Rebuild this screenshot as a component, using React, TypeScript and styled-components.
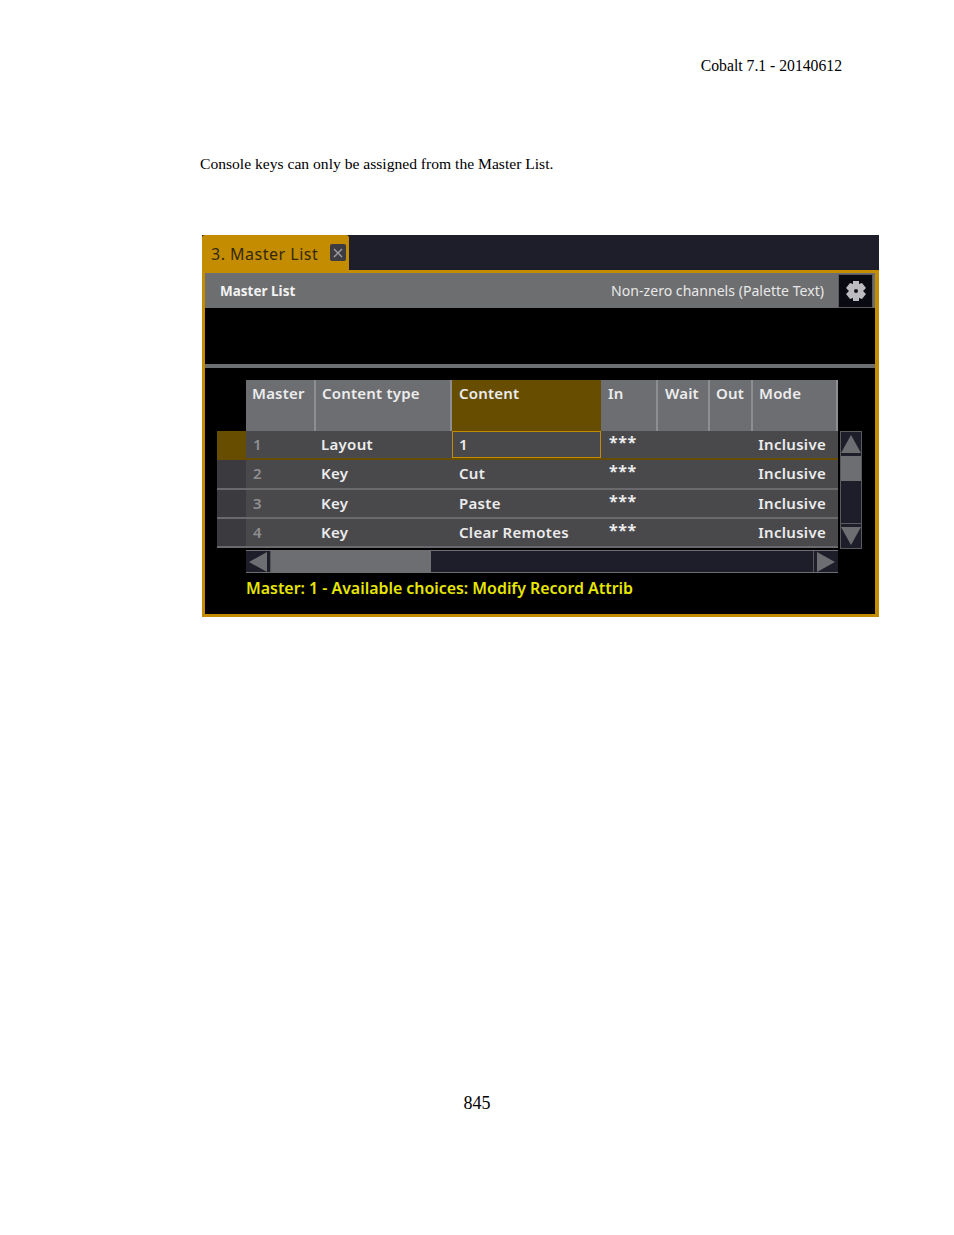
import React from "react";
import styled, { createGlobalStyle } from "styled-components";

const GlobalStyle = createGlobalStyle`
  html, body {
    margin: 0;
    padding: 0;
    background: #fff;
  }
`;

const UI_FONT = `"Noto Sans", "Open Sans", sans-serif`;
const COLUMNS = "70px 136px 149px 57px 52px 43px 85px";

const Page = styled.div`
  width: 954px;
  height: 1235px;
  overflow: hidden;
  font-family: "Liberation Serif", serif;
  color: #000;
`;

const RunningHead = styled.div`
  padding: 57px 112px 0 0;
  height: 18px;
  line-height: 18px;
  font-size: 15.7px;
  text-align: right;
`;

const BodyText = styled.p`
  margin: 0;
  padding: 80px 0 0 200px;
  height: 18px;
  line-height: 18px;
  font-size: 15.6px;
`;

const Window = styled.div`
  margin: 62px 0 0 202px;
  width: 677px;
  height: 382px;
  font-family: ${UI_FONT};
`;

const TabStrip = styled.div`
  height: 35px;
  background: #1e1e2a;
`;

const Tab = styled.div`
  width: 147px;
  height: 35px;
  box-sizing: border-box;
  padding: 9px 3px 0 9px;
  display: flex;
  align-items: flex-start;
  justify-content: space-between;
  background: #c48c00;
  border-radius: 3px 3px 0 0;
  color: #33290f;
  font-size: 16px;
  line-height: 20px;
  letter-spacing: 0.5px;
`;

const CloseButton = styled.span`
  width: 16px;
  height: 17px;
  display: flex;
  align-items: center;
  justify-content: center;
  background: #3c3c42;
  border-radius: 2px;
`;

const Frame = styled.div`
  height: 347px;
  box-sizing: border-box;
  border: solid #c48c00;
  border-width: 3px 4px 3px 3px;
  background: #000;
`;

const TitleBar = styled.div`
  height: 35px;
  display: flex;
  align-items: center;
  background: #6d6e70;
  color: #f2f2f2;
`;

const TitleText = styled.span`
  margin-left: 15px;
  font-size: 13.5px;
  font-weight: 700;
`;

const FilterText = styled.span`
  margin-left: auto;
  margin-right: 14px;
  font-size: 14.1px;
  color: #e8e8e8;
`;

const GearButton = styled.span`
  width: 35px;
  height: 34px;
  margin: 1px 2px 0 0;
  box-sizing: border-box;
  display: flex;
  align-items: center;
  justify-content: center;
  border: 1px solid #5a5a5e;
  background: #0a0a12;
`;

const BlackBand = styled.div`
  height: 56px;
`;

const Divider = styled.div`
  height: 4px;
  background: #6d6e70;
`;

const TableArea = styled.div`
  padding: 12px 0 0 12px;
`;

const HeaderRow = styled.div`
  margin-left: 29px;
  width: 592px;
  height: 51px;
  display: grid;
  grid-template-columns: ${COLUMNS};
`;

const HeaderCell = styled.div<{ $active?: boolean; $indent?: number }>`
  box-sizing: border-box;
  padding: 3px 0 0 ${(p) => p.$indent ?? 7}px;
  background: ${(p) => (p.$active ? "#664d00" : "#6d6e72")};
  border-right: 2px solid ${(p) => (p.$active ? "#664d00" : "#8d8e92")};
  color: #ececec;
  font-size: 15px;
  font-weight: 600;
  line-height: 20px;
  letter-spacing: 0.2px;
  white-space: nowrap;
`;

const BodyWrap = styled.div`
  display: flex;
  align-items: flex-start;
`;

const Rows = styled.div`
  width: 621px;
`;

const Row = styled.div<{ $selected?: boolean }>`
  height: 29.33px;
  box-sizing: border-box;
  display: flex;
  border-bottom: 2px solid ${(p) => (p.$selected ? "#664d00" : "#6a6a6e")};
  background: #49494c;
`;

const RowHandle = styled.div<{ $selected?: boolean }>`
  width: 29px;
  background: ${(p) => (p.$selected ? "#664d00" : "#3a3a3f")};
`;

const RowCells = styled.div`
  flex: 1;
  display: grid;
  grid-template-columns: ${COLUMNS};
`;

const Cell = styled.div<{ $kind?: "num" | "stars" | "focus" | "type"; $right?: boolean }>`
  box-sizing: border-box;
  padding: ${(p) => {
    if (p.$kind === "stars") return "1px 0 0 8px";
    if (p.$kind === "type") return "3px 0 0 5px";
    return "3px 0 0 7px";
  }};
  color: ${(p) => (p.$kind === "num" ? "#8f8f92" : "#ececec")};
  font-size: ${(p) => (p.$kind === "stars" ? "16px" : "15px")};
  font-weight: ${(p) => (p.$kind === "stars" ? 700 : 600)};
  line-height: 20px;
  letter-spacing: ${(p) => (p.$kind === "stars" ? "0.6px" : "0.3px")};
  white-space: nowrap;
  ${(p) => p.$kind === "focus" && "border: 1px solid #c48c00; padding: 2px 0 0 6px;"}
  ${(p) => p.$right && "justify-self: end; padding-right: 12px;"}
`;

const VScroll = styled.div`
  margin-left: 2px;
  width: 22px;
  height: 118px;
  box-sizing: border-box;
  display: flex;
  flex-direction: column;
  border: 1px solid #5a5a5e;
  background: #1e1e2a;
`;

const VArrow = styled.div`
  height: 24px;
  display: flex;
  align-items: center;
  justify-content: center;
  background: #1e1e2a;
`;

const VThumb = styled.div`
  height: 25px;
  background: #6d6e72;
`;

const VTrack = styled.div`
  flex: 1;
  border-bottom: 1px solid #5a5a5e;
`;

const HScroll = styled.div`
  margin: 1px 0 0 29px;
  width: 592px;
  height: 23px;
  box-sizing: border-box;
  display: flex;
  border-bottom: 1px solid #6d6e72;
  border-top: 1px solid #6d6e72;
  background: #1e1e2a;
`;

const HArrow = styled.div<{ $end?: boolean }>`
  width: 24px;
  display: flex;
  align-items: center;
  justify-content: center;
  border-${(p) => (p.$end ? "left" : "right")}: 1px solid #55555a;
  ${(p) => p.$end && "margin-left: auto;"}
`;

const HThumb = styled.div`
  width: 160px;
  background: #6d6e72;
`;

const StatusLine = styled.div`
  margin: 4px 0 0 29px;
  height: 22px;
  line-height: 22px;
  color: #e6e600;
  font-size: 15.9px;
  font-weight: 600;
  white-space: nowrap;
`;

const PageNumber = styled.div`
  margin-top: 476px;
  height: 20px;
  line-height: 20px;
  font-size: 18px;
  text-align: center;
`;

type Master = { id: number; type: string; content: string };

const masters: Master[] = [
  { id: 1, type: "Layout", content: "1" },
  { id: 2, type: "Key", content: "Cut" },
  { id: 3, type: "Key", content: "Paste" },
  { id: 4, type: "Key", content: "Clear Remotes" },
];

function Triangle({ dir }: { dir: "up" | "down" | "left" | "right" }) {
  const points = {
    up: "10,0 20,18 0,18",
    down: "0,0 20,0 10,18",
    left: "18,0 18,20 0,10",
    right: "0,0 18,10 0,20",
  }[dir];
  const vertical = dir === "up" || dir === "down";
  return (
    <svg width={vertical ? 20 : 18} height={vertical ? 18 : 20} viewBox={vertical ? "0 0 20 18" : "0 0 18 20"}>
      <polygon points={points} fill="#6d6e72" />
    </svg>
  );
}

function Gear() {
  return (
    <svg width="22" height="24" viewBox="0 0 22 24">
      <path
        d="M8 2h6v3l3-1 4 5-3 3 3 3-4 5-3-1v3H8v-3l-3 1-4-5 3-3-3-3 4-5 3 1z"
        fill="#bcbcc0"
      />
      <circle cx="11" cy="12" r="2" fill="#15151c" />
    </svg>
  );
}

export default function App() {
  return (
    <Page>
      <GlobalStyle />
      <RunningHead>Cobalt 7.1 - 20140612</RunningHead>
      <BodyText>Console keys can only be assigned from the Master List.</BodyText>
      <Window>
        <TabStrip>
          <Tab>
            3. Master List
            <CloseButton>
              <svg width="10" height="10" viewBox="0 0 10 10">
                <path d="M1 1l8 8M9 1l-8 8" stroke="#a0a0a4" strokeWidth="1.400" />
              </svg>
            </CloseButton>
          </Tab>
        </TabStrip>
        <Frame>
          <TitleBar>
            <TitleText>Master List</TitleText>
            <FilterText>Non-zero channels (Palette Text)</FilterText>
            <GearButton>
              <Gear />
            </GearButton>
          </TitleBar>
          <BlackBand />
          <Divider />
          <TableArea>
            <HeaderRow>
              <HeaderCell $indent={6}>Master</HeaderCell>
              <HeaderCell $indent={6}>Content type</HeaderCell>
              <HeaderCell $active>Content</HeaderCell>
              <HeaderCell>In</HeaderCell>
              <HeaderCell>Wait</HeaderCell>
              <HeaderCell $indent={6}>Out</HeaderCell>
              <HeaderCell $indent={6}>Mode</HeaderCell>
            </HeaderRow>
            <BodyWrap>
              <Rows>
                {masters.map((m, i) => (
                  <Row key={m.id} $selected={i === 0}>
                    <RowHandle $selected={i === 0} />
                    <RowCells>
                      <Cell $kind="num">{m.id}</Cell>
                      <Cell $kind="type">{m.type}</Cell>
                      <Cell $kind={i === 0 ? "focus" : undefined}>{m.content}</Cell>
                      <Cell $kind="stars">***</Cell>
                      <Cell />
                      <Cell />
                      <Cell $right>Inclusive</Cell>
                    </RowCells>
                  </Row>
                ))}
              </Rows>
              <VScroll>
                <VArrow>
                  <Triangle dir="up" />
                </VArrow>
                <VThumb />
                <VTrack />
                <VArrow>
                  <Triangle dir="down" />
                </VArrow>
              </VScroll>
            </BodyWrap>
            <HScroll>
              <HArrow>
                <Triangle dir="left" />
              </HArrow>
              <HThumb />
              <HArrow $end>
                <Triangle dir="right" />
              </HArrow>
            </HScroll>
            <StatusLine>Master: 1 - Available choices: Modify Record Attrib</StatusLine>
          </TableArea>
        </Frame>
      </Window>
      <PageNumber>845</PageNumber>
    </Page>
  );
}
